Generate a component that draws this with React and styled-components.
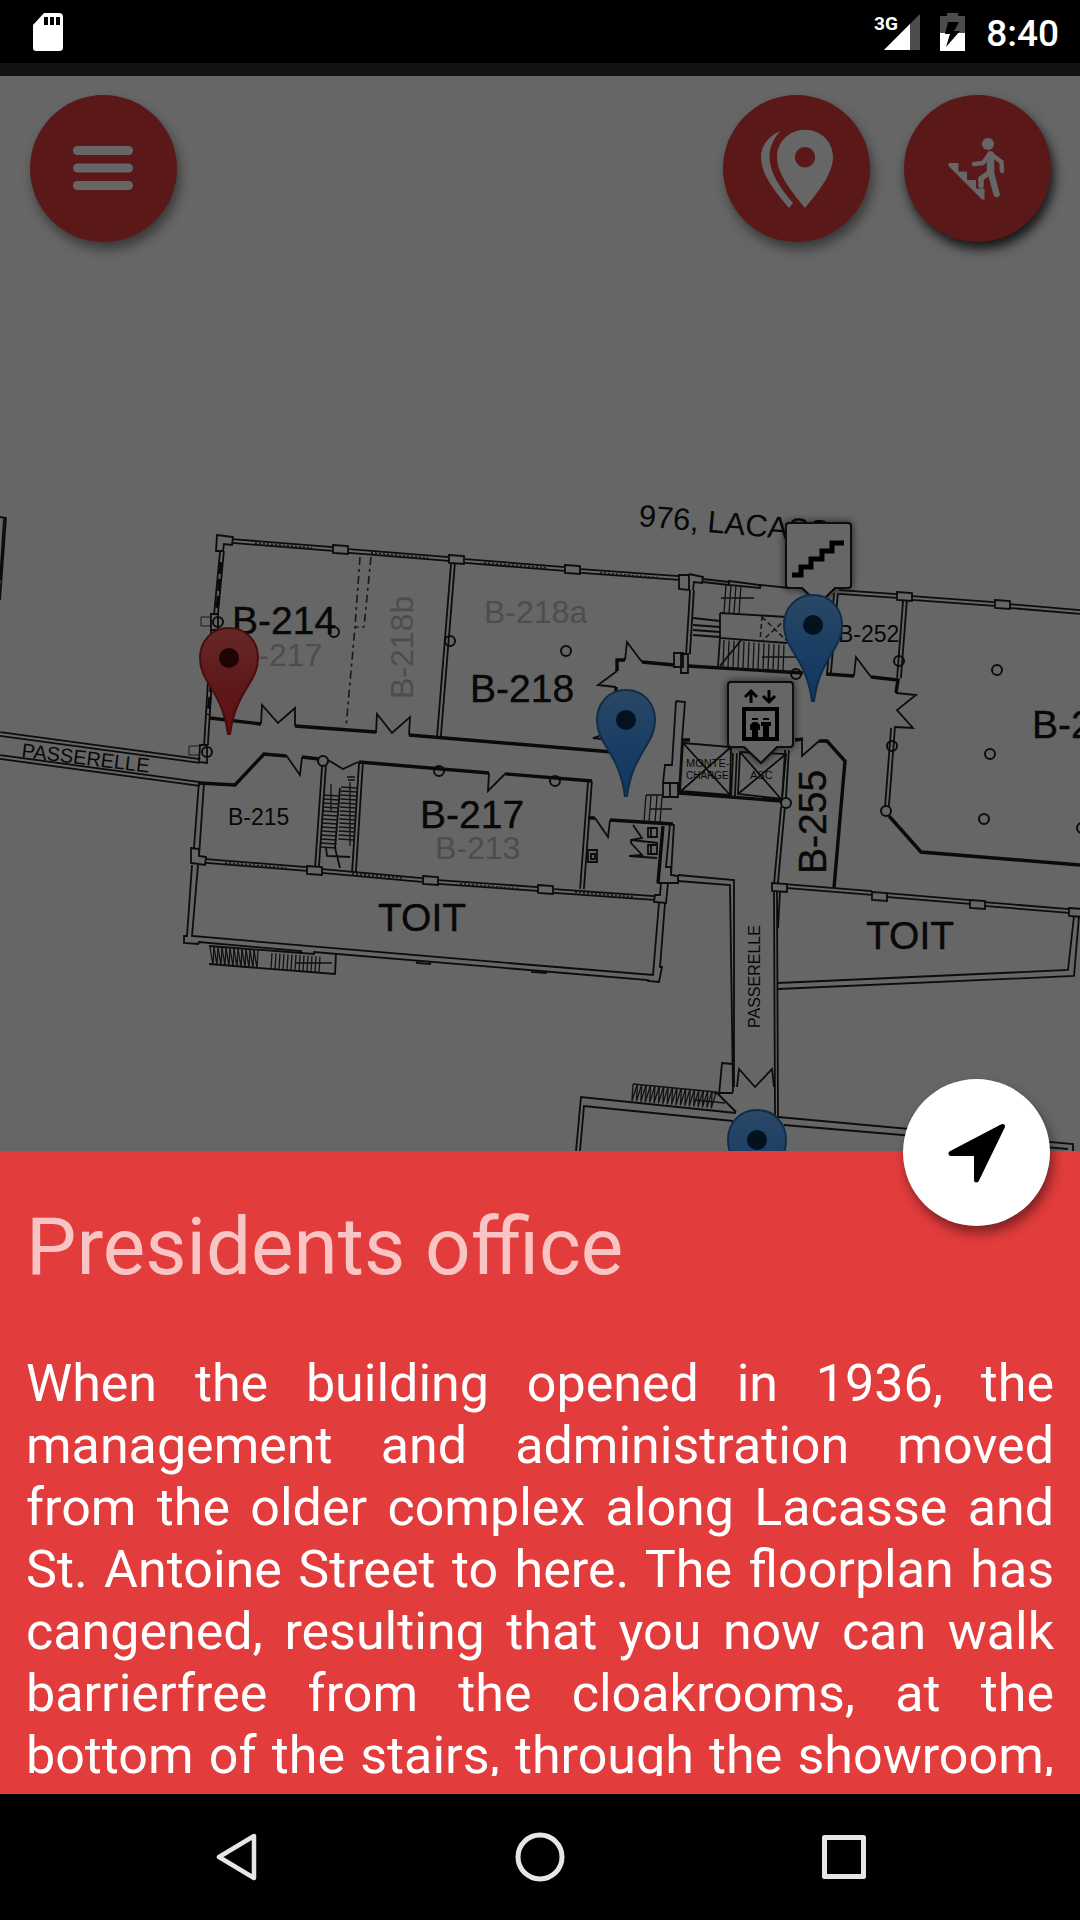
import React from "react";
import styled, { createGlobalStyle } from "styled-components";

const GlobalStyle = createGlobalStyle`
  *, *::before, *::after { box-sizing: border-box; }
  body { margin: 0; background: #000; font-family: Roboto, "Noto Sans", sans-serif; }
`;

const Screen = styled.div`
  display: flex;
  flex-direction: column;
  min-height: 100vh;
  background: #000;
`;

const StatusBar = styled.header`
  display: flex;
  align-items: center;
  justify-content: space-between;
  height: 63px;
  padding: 0 21px 0 32px;
  color: #fff;
`;

const StatusGroup = styled.div`
  display: flex;
  align-items: center;
  gap: 20px;
`;

const Clock = styled.time`
  font-size: 37px;
  line-height: 44px;
  font-weight: 500;
  padding-top: 4px;
`;

const HeaderEdge = styled.div`
  height: 13px;
  background: #131313;
`;

const MapArea = styled.main`
  position: relative;
  flex: 1;
  background: #666;
  overflow: hidden;
`;

const FloorPlan = styled.svg`
  position: absolute;
  inset: 0;
  width: 100%;
  height: 100%;
  font-family: "Liberation Sans", Arial, sans-serif;
`;

const Toolbar = styled.div`
  position: relative;
  display: flex;
  gap: 34px;
  padding: 19px 29px 0 30px;
`;

const Fab = styled.button`
  display: flex;
  align-items: center;
  justify-content: center;
  width: 147px;
  height: 147px;
  padding: 0;
  border: 0;
  border-radius: 50%;
  background: ${(p) => (p.$light ? "#fff" : "#5b1818")};
  color: ${(p) => (p.$light ? "#000" : "#666")};
  box-shadow: 3px 7px 12px rgba(0, 0, 0, ${(p) => (p.$raised ? 0.8 : 0.45)});
  margin-right: ${(p) => (p.$push ? "auto" : "0")};
`;

const Sheet = styled.section`
  position: relative;
  padding: 50px 26px 18px;
  background: #e23c3c;
`;

const SheetAction = styled.div`
  position: absolute;
  top: -72px;
  right: 30px;
`;

const Title = styled.h1`
  margin: 0 0 60px;
  font-size: 80px;
  line-height: 92px;
  font-weight: 400;
  color: #f9c4c4;
`;

const Description = styled.p`
  margin: 0;
  max-height: 423px;
  overflow-y: auto;
  scrollbar-width: none;
  font-size: 52px;
  line-height: 62px;
  color: #fff;
  text-align: justify;
  text-align-last: justify;
`;

const NavBar = styled.nav`
  display: flex;
  justify-content: center;
  height: 126px;
`;

const NavButton = styled.button`
  display: flex;
  align-items: center;
  justify-content: center;
  width: 304px;
  padding: 0;
  border: 0;
  background: none;
  color: #e6e6e6;
`;

function SdCardIcon() {
  return (
    <svg width="31" height="40" viewBox="0 0 31 40" aria-hidden="true">
      <path fill="#fff" d="M12 1H27Q31 1 31 5V36Q31 39 27 39H4Q1 39 1 36V13Z" />
      <path d="M12 5h4v8h-4zM18 5h4v8h-4zM24 5h4v8h-4z" />
    </svg>
  );
}

function SignalIcon() {
  return (
    <svg width="46" height="40" viewBox="0 0 46 40" aria-hidden="true">
      <path fill="#4d4d4d" d="M46 2V38H10Z" />
      <path fill="#fff" d="M36 12V38H10Z" />
      <text x="0" y="18" fontSize="19" fontWeight="700" fill="#fff">3G</text>
    </svg>
  );
}

function BatteryIcon() {
  return (
    <svg width="26" height="40" viewBox="0 0 26 40" aria-hidden="true">
      <path fill="#4d4d4d" d="M7 1H18V4H25V21H0V4H7Z" />
      <path fill="#fff" d="M0 21H25V39H0Z" />
      <path d="M8 10H19L14 19H20L6 35L10 22H5Z" />
    </svg>
  );
}

function MenuIcon() {
  return (
    <svg width="61" height="45" viewBox="0 0 61 45" fill="currentColor" aria-hidden="true">
      <rect width="60" height="9" rx="4.5" />
      <rect y="17.5" width="60" height="9" rx="4.5" />
      <rect y="35" width="60" height="9" rx="4.5" />
    </svg>
  );
}

function PlacesIcon() {
  return (
    <svg width="80" height="80" viewBox="0 0 80 80" fill="currentColor" aria-hidden="true">
      <path
        fillRule="evenodd"
        d="M48 .7C32 .7 20 13 20 28C20 46 37 65 48 79C59 65 76 46 76 28C76 13 64 .7 48 .7ZM48 18A10.200 10.200 0 1 1 48 38.400A10.200 10.200 0 1 1 48 18Z"
      />
      <path d="M24 1.700C11 7 4 17 4 28C4 46 19 64 32 79L36 74C24 60 12.500 44 12.500 28C12.500 18 17 8 24 1.700Z" />
    </svg>
  );
}

function StairsPersonIcon() {
  return (
    <svg width="66" height="64" viewBox="0 0 66 64" aria-hidden="true">
      <g fill="currentColor">
        <circle cx="43" cy="7" r="6" />
        <path d="M3.500 26H13.500V34.500H22V43H31V51.500H39.500V62.500H37L3.500 29Z" />
      </g>
      <path d="M43 36L36 41.500V46.500" fill="none" stroke="#5b1818" strokeWidth="8" strokeLinecap="round" />
      <g fill="none" stroke="currentColor" strokeLinecap="round" strokeLinejoin="round">
        <path strokeWidth="4.500" d="M29 27L38 26L45 16.500L56.500 25L57 34" />
        <path strokeWidth="7.500" d="M45.500 18V36" />
        <path strokeWidth="5.500" d="M44 36L36 41.500V48.500" />
        <path strokeWidth="6.500" d="M46 36L51.500 57" />
      </g>
    </svg>
  );
}

function NavigateIcon() {
  return (
    <svg width="64" height="64" viewBox="0 0 64 64" aria-hidden="true">
      <path
        d="M57.500 5.500L6 32.500H31.500V59Z"
        fill="currentColor"
        stroke="currentColor"
        strokeWidth="5"
        strokeLinejoin="round"
      />
    </svg>
  );
}

/* Walls drawn as two parallel strokes: x1, y1, x2, y2 of the centre line. */
const doubleWalls = [
  [232, 541, 333, 549], [349, 551, 449, 559], [465, 561, 565, 569], [581, 571, 679, 578],
  [839, 592, 897, 596], [912, 598, 994, 604], [1009, 606, 1080, 612],
  [222, 551, 216, 614], [213, 630, 206, 745],
  [0, 734, 200, 761], [0, 757, 200, 784],
  [206, 861, 307, 869], [322, 871, 422, 880], [438, 882, 538, 889], [554, 891, 654, 898],
  [453, 563, 439, 736],
  [692, 590, 688, 654], [836, 593, 829, 673], [905, 600, 899, 678],
  [324, 766, 317, 867], [361, 762, 354, 872], [590, 781, 582, 889],
  [787, 750, 784, 798], [783, 807, 776, 883],
  [785, 886, 872, 893], [886, 895, 970, 902], [984, 904, 1069, 911],
  [893, 728, 887, 806], [735, 753, 733, 796],
];

const windowBoxes = [
  [333, 545], [449, 555], [565, 565], [897, 592], [995, 600],
  [307, 866], [423, 876], [538, 885], [772, 883], [872, 892], [970, 900], [1069, 908],
];

const columns = [
  [218, 622], [207, 752], [450, 641], [566, 651], [334, 632], [796, 674], [899, 661],
  [892, 746], [886, 811], [997, 670], [990, 754], [984, 819], [1082, 828],
  [323, 761], [439, 771], [555, 781], [786, 803],
];

const solidWalls = [
  "M210 718L261 724M295 726L376 732M409 735L612 752",
  "M199 783L235 785L264 754L286 756M302 757L319 759",
  "M359 762L489 773M506 774L592 781",
  "M642 662L674 665M688 666L803 673",
  "M617 671V660H625M616 687V693",
  "M826 674L854 676M871 677L898 680L896 693",
  "M819 741H827L845 761L834 888",
  "M889 816L921 852L1080 865",
  "M679 793L782 801M610 820L673 824M588 818H595",
  "M663 826L658 883M682 740H690M795 740L803 739",
];

const fineLines = [
  "M0 517L6 518L0 600M4 518L0 580",
  "M217 535L233 537L232 545L224 544L223 551L216 551Z",
  "M211 614H218V630H211ZM200 745H207V763L199 762Z",
  "M261 724L262 705L278 723L295 708V726",
  "M376 733L377 714L392 733L410 717L409 735",
  "M642 662L627 642L625 660M617 671L598 685L616 687M602 735L593 738L602 739",
  "M679 575H689V590L679 589ZM689 574L703 577L702 583L694 582L693 590",
  "M703 579L729 582M729 581L760 585V588L729 585ZM760 585L790 588M703 582L729 585",
  "M674 653H683V667H674ZM681 654H688V673H681Z",
  "M854 676L856 657L871 677M896 693L916 695L897 710L913 728L894 727",
  "M676 701L685 702L682 740L679 792M676 701L672 765H665L663 783M663 783H678V797H663ZM670 783V797",
  "M795 740L802 739V756L819 741",
  "M286 755L300 775L302 757M489 773L488 791L506 773",
  "M328 760L343 769L358 762",
  "M199 781L194 848M204 783L199 856M191 848L199 849V856L206 857L205 865L191 863Z",
  "M192 865L187 936H184V943L198 944L199 942L301 951V953L314 954V952L648 980V981L659 982L662 967H660L665 903",
  "M198 865L192 936L520 964L653 975L659 903",
  "M417 961V963L430 964V962M532 970V972L546 973V971",
  "M661 883L668 883L666 903L654 902L655 895H660Z",
  "M595 818L608 837L610 820",
  "M670 824L666 867H671L671 875L678 876V883H657M674 824L671 875",
  "M633 825L642 838L631 840V843L642 855L629 856L657 858M631 840L658 843",
  "M588 850H597V862H588ZM591 854H595V859H591Z",
  "M648 828H657V837H648ZM651 829V836M648 845H657V854H648ZM651 846V853",
  "M678 875L734 880V1087M678 881L730 885L733 1092",
  "M774 892L775 1115M777 892L778 1117M780 892L778 928",
  "M1074 916L1068 970L778 983M1079 916L1074 976L778 989",
  "M737 1087L739 1069L755 1087L772 1069L774 1087",
  "M576 1151L581 1097L736 1113M580 1151L584 1106L733 1121",
  "M778 1117L1073 1144V1151M784 1125L1068 1149",
  "M733 1064L722 1063L719 1095M716 1092L736 1112M714 1093H733",
  "M720 613L787 617M720 613V638L787 643M693 618L720 621M693 625L720 627M693 630L720 632M693 635L720 637",
  "M720 638L718 666M742 639L720 666",
  "M683 743L731 747L730 795L680 791ZM684 744L730 795M731 747L681 791",
  "M740 752L786 754L782 799L738 794ZM740 752L781 799M786 754L738 794",
  "M340 788L335 848L340 868M326 848L327 856L350 857",
  "M209 964L335 974L336 954M209 946L302 953",
];

const range = (n) => Array.from({ length: n }, (_, i) => i);

function Hatching() {
  return (
    <g stroke="#111" strokeWidth="1.300" fill="none">
      {range(14).map((i) => (
        <path key={`l${i}`} d={`M${323 - i * 0.2} ${795 + i * 4}l16 1M${341 - i * 0.2} ${787 + i * 4}l16 1`} />
      ))}
      <path d="M331 784V812M350 782V846M347 777h8M348 780h7" />
      {range(12).map((i) => (
        <path key={`e${i}`} d={`M${210 + i * 4} ${947 + i * 0.3}l3 18l1 -18`} />
      ))}
      {range(13).map((i) => (
        <path key={`f${i}`} d={`M${272 + i * 4} ${953 + i * 0.3}l-1 16`} />
      ))}
      <path d="M296 963H332" />
      {range(19).map((i) => (
        <path key={`g${i}`} d={`M${633 + i * 4.4} ${1084 + i * 0.4}l-1 17l5 -16`} />
      ))}
      <path d="M633 1084L716 1092M694 1100L725 1103" />
      {range(13).map((i) => (
        <path key={`s${i}`} d={`M${724 + i * 5} ${640 + i * 0.4}l-1 27`} />
      ))}
      {range(4).map((i) => (
        <path key={`t${i}`} d={`M${726 + i * 5} 585l-2 28`} />
      ))}
      <path d="M721 598H754M762 657H798" />
      <path d="M646 795L644 822M651 796L649 822M657 796L655 822M662 797L660 822M646 795H662M650 809H672" />
    </g>
  );
}

const labels = [
  { t: "B-214", x: 232, y: 634, s: 39, strong: true },
  { t: "B-217", x: 237, y: 666, s: 32, faded: true },
  { t: "B-218a", x: 484, y: 623, s: 32, faded: true },
  { t: "B-218b", x: 413, y: 699, s: 32, faded: true, r: -90 },
  { t: "B-218", x: 470, y: 702, s: 39, strong: true },
  { t: "976, LACASSE", x: 638, y: 526, s: 31, r: 5 },
  { t: "B-252", x: 838, y: 642, s: 23 },
  { t: "B-2", x: 1032, y: 738, s: 39, strong: true },
  { t: "B-215", x: 228, y: 825, s: 23 },
  { t: "B-217", x: 420, y: 828, s: 39, strong: true },
  { t: "B-213", x: 435, y: 859, s: 32, faded: true },
  { t: "TOIT", x: 378, y: 931, s: 39, strong: true },
  { t: "TOIT", x: 866, y: 949, s: 39, strong: true },
  { t: "B-255", x: 826, y: 874, s: 39, strong: true, r: -90 },
  { t: "PASSERELLE", x: 21, y: 757, s: 20, r: 7 },
  { t: "PASSERELLE", x: 760, y: 1028, s: 16, r: -90 },
  { t: "MONTE-", x: 686, y: 767, s: 11 },
  { t: "CHARGE", x: 686, y: 779, s: 10 },
  { t: "ASC", x: 750, y: 779, s: 11 },
];

function MapPin({ x, y, red }) {
  return (
    <g
      transform={`translate(${x} ${y})`}
      fill={red ? "url(#pinRed)" : "url(#pinBlue)"}
      stroke={red ? "#4a0d0e" : "#0f2c4a"}
      strokeWidth="2"
    >
      <path d="M0 -30C-17 -30 -29 -17 -29 0C-29 25 -7 32 -1 76H1C7 32 29 25 29 0C29 -17 17 -30 0 -30Z" />
      <circle r="10" fill={red ? "#200405" : "#04121f"} stroke="none" />
    </g>
  );
}

function Sign({ x, y, children }) {
  return (
    <g transform={`translate(${x} ${y})`}>
      <path
        d="M3 0H62Q65 0 65 3V62Q65 65 62 65H49L33 81L16 65H3Q0 65 0 62V3Q0 0 3 0Z"
        fill="#666"
        stroke="#080808"
        strokeWidth="2"
        filter="url(#signShadow)"
      />
      {children}
    </g>
  );
}

function Map() {
  return (
    <FloorPlan viewBox="0 76 1080 1075" preserveAspectRatio="xMidYMin slice" role="img" aria-label="Floor plan">
      <defs>
        <linearGradient id="pinBlue" x1="0" y1="0" x2="0" y2="1">
          <stop offset="0" stopColor="#2a4866" />
          <stop offset="0.6" stopColor="#183c63" />
          <stop offset="1" stopColor="#123660" />
        </linearGradient>
        <linearGradient id="pinRed" x1="0" y1="0" x2="0" y2="1">
          <stop offset="0" stopColor="#662829" />
          <stop offset="0.6" stopColor="#5e1718" />
          <stop offset="1" stopColor="#641011" />
        </linearGradient>
        <filter id="signShadow" x="-20%" y="-20%" width="140%" height="140%">
          <feDropShadow dx="0" dy="0" stdDeviation="4" floodColor="#000" floodOpacity="0.7" />
        </filter>
      </defs>

      <g fill="none" stroke="#0c0c0c" strokeWidth="1.800">
        {doubleWalls.map(([x1, y1, x2, y2]) => {
          const length = Math.hypot(x2 - x1, y2 - y1);
          const nx = (-(y2 - y1) / length) * 1.9;
          const ny = ((x2 - x1) / length) * 1.9;
          return (
            <path
              key={`${x1}-${y1}`}
              d={`M${x1 + nx} ${y1 + ny}L${x2 + nx} ${y2 + ny}M${x1 - nx} ${y1 - ny}L${x2 - nx} ${y2 - ny}`}
            />
          );
        })}
        {fineLines.map((d) => <path key={d} d={d} />)}
      </g>

      <g fill="none" stroke="#0a0a0a" strokeWidth="3.400">
        {solidWalls.map((d) => <path key={d} d={d} />)}
        <path d="M221 562L217 612M212 680L208 715" strokeDasharray="12 5" />
      </g>

      <g fill="none" stroke="#1a1a1a" strokeWidth="2" strokeDasharray="2 2">
        <path d="M255 543L312 548M371 553L428 558M484 563L546 568M600 573L660 578" />
        <path d="M225 863L286 868M352 874L404 878M460 884L520 889M575 892L634 897" />
      </g>

      <g fill="none" stroke="#181818" strokeWidth="1.600" strokeDasharray="8 4 3 4">
        <path d="M360 557L355 627L346 727M371 557L364 627H355" />
        <path d="M762 616L760 642M762 617L787 641M787 618L762 641" strokeDasharray="5 3" />
        <path d="M211 617H201V626H211M199 746H189V755H199" strokeDasharray="none" strokeWidth="1" />
      </g>

      <Hatching />

      <g fill="#666" stroke="#0c0c0c" strokeWidth="1.800">
        {windowBoxes.map(([x, y]) => (
          <path key={`${x}-${y}`} d={`M${x} ${y}l15 1v8l-15 -1z`} />
        ))}
      </g>
      <g fill="none" stroke="#0c0c0c" strokeWidth="2">
        {columns.map(([x, y]) => (
          <circle key={`${x}-${y}`} cx={x} cy={y} r="5" />
        ))}
      </g>

      {labels.map((l) => (
        <text
          key={`${l.x}-${l.y}`}
          transform={`translate(${l.x} ${l.y}) rotate(${l.r || 0})`}
          fontSize={l.s}
          fill={l.faded ? "#4d4d4d" : "#080808"}
          stroke={l.strong ? "#080808" : "none"}
          strokeWidth="0.400"
        >
          {l.t}
        </text>
      ))}

      <Sign x={786} y={523}>
        <path d="M6 52H15V44H25V36H36V28H46V20H58" fill="none" stroke="#000" strokeWidth="5" />
      </Sign>
      <Sign x={728} y={682}>
        <path d="M23 21V9M17 15L23 9L29 15M41 8V20M35 14L41 20L47 14" fill="none" stroke="#000" strokeWidth="3" />
        <path d="M16 27H49V57H16Z" fill="none" stroke="#000" strokeWidth="4" />
        <path d="M24 36h6v2h-6zM35 36h6v2h-6zM22 43l3 -3h4l3 3v5h-2v8h-6v-8h-2zM33 40h10v4h-2v12h-6v-12h-2z" />
      </Sign>

      <MapPin x={229} y={658} red />
      <MapPin x={626} y={720} />
      <MapPin x={813} y={625} />
      <MapPin x={757} y={1140} />
    </FloorPlan>
  );
}

export default function App() {
  return (
    <Screen>
      <GlobalStyle />
      <StatusBar>
        <SdCardIcon />
        <StatusGroup>
          <SignalIcon />
          <BatteryIcon />
          <Clock>8:40</Clock>
        </StatusGroup>
      </StatusBar>
      <HeaderEdge />
      <MapArea>
        <Map />
        <Toolbar>
          <Fab type="button" aria-label="Menu" $push>
            <MenuIcon />
          </Fab>
          <Fab type="button" aria-label="Places">
            <PlacesIcon />
          </Fab>
          <Fab type="button" aria-label="Use stairs" $raised>
            <StairsPersonIcon />
          </Fab>
        </Toolbar>
      </MapArea>
      <Sheet>
        <SheetAction>
          <Fab type="button" aria-label="Navigate here" $light>
            <NavigateIcon />
          </Fab>
        </SheetAction>
        <Title>Presidents office</Title>
        <Description>
          When the building opened in 1936, the management and administration moved from the older
          complex along Lacasse and St. Antoine Street to here. The floorplan has cangened, resulting
          that you now can walk barrierfree from the cloakrooms, at the bottom of the stairs, through
          the showroom,
        </Description>
      </Sheet>
      <NavBar>
        <NavButton type="button" aria-label="Back">
          <svg width="50" height="50" viewBox="0 0 50 50" fill="none" stroke="currentColor" strokeWidth="4.500" strokeLinejoin="round">
            <path d="M43 4V46L8 25Z" />
          </svg>
        </NavButton>
        <NavButton type="button" aria-label="Home">
          <svg width="50" height="50" viewBox="0 0 50 50" fill="none" stroke="currentColor" strokeWidth="5">
            <circle cx="25" cy="25" r="22" />
          </svg>
        </NavButton>
        <NavButton type="button" aria-label="Recent apps">
          <svg width="50" height="50" viewBox="0 0 50 50" fill="none" stroke="currentColor" strokeWidth="5" strokeLinejoin="round">
            <rect x="5.500" y="5.500" width="39" height="39" />
          </svg>
        </NavButton>
      </NavBar>
    </Screen>
  );
}
